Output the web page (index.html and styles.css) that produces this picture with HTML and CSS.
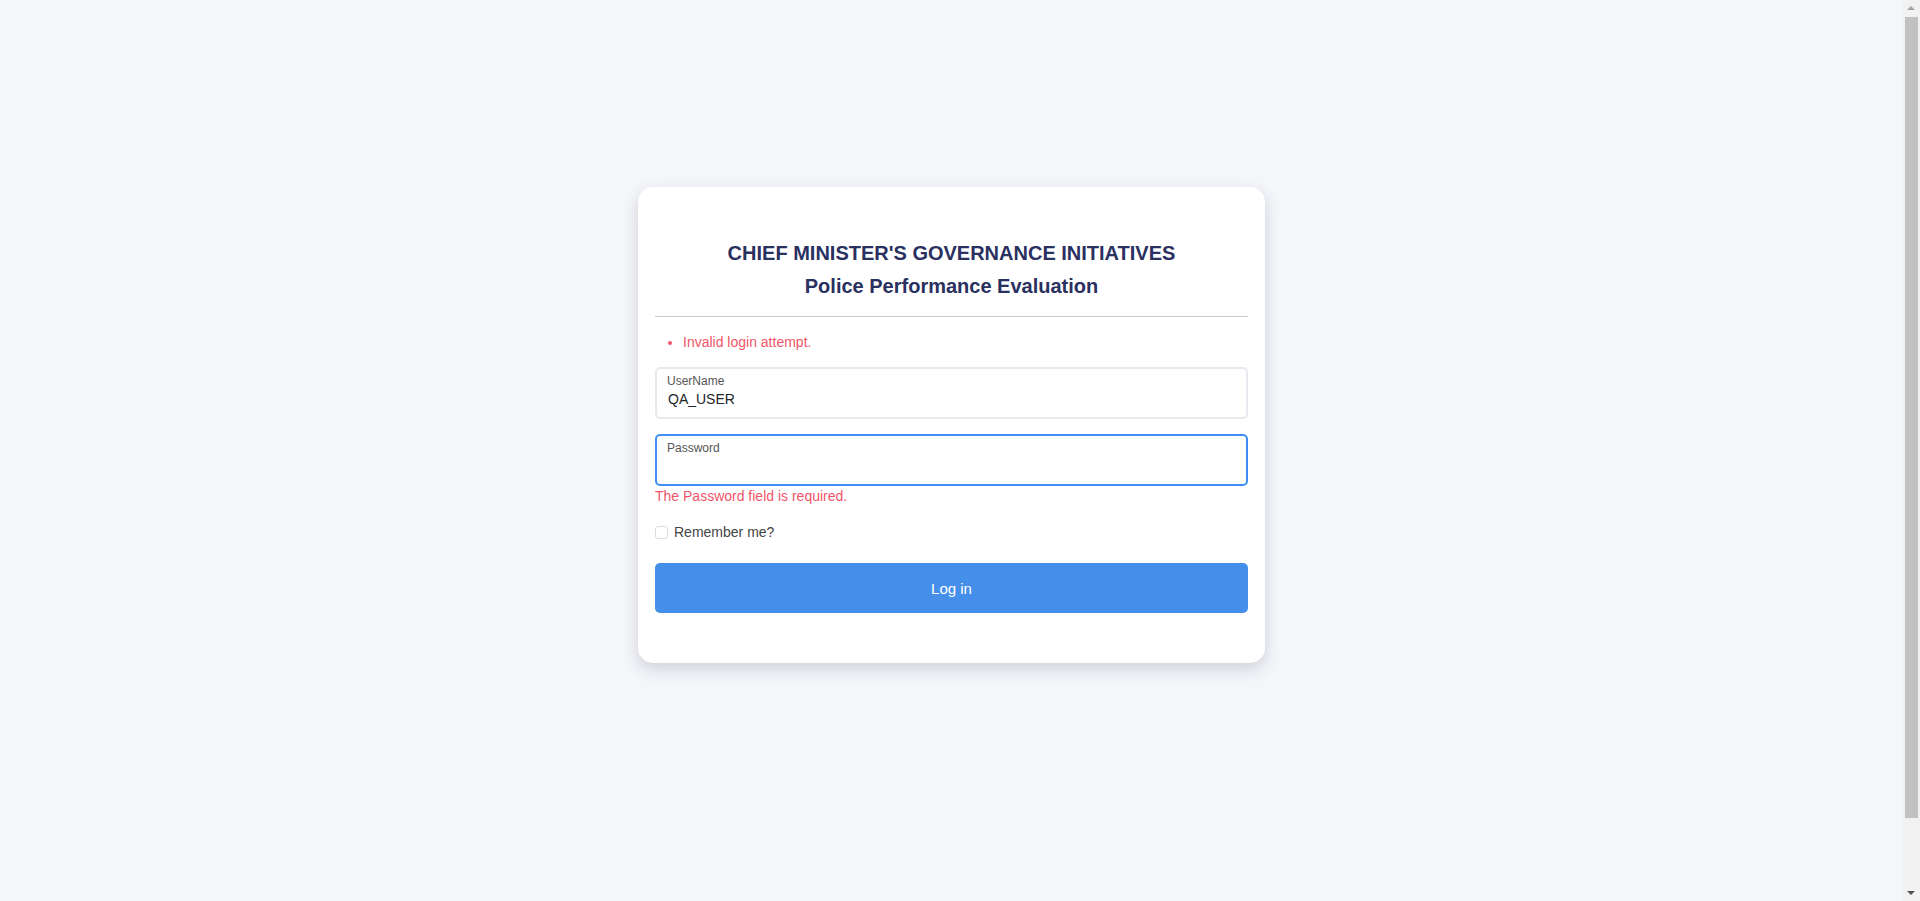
FILE: index.html
```html
<!DOCTYPE html>
<html lang="en">
<head>
<meta charset="utf-8">
<title>Log in</title>
<link rel="stylesheet" href="styles.css">
</head>
<body>
<main class="page">
  <section class="card">
    <h1 class="title">CHIEF MINISTER'S GOVERNANCE INITIATIVES</h1>
    <h2 class="subtitle">Police Performance Evaluation</h2>
    <hr class="divider">
    <ul class="summary">
      <li>Invalid login attempt.</li>
    </ul>
    <div class="field">
      <label class="field-label">UserName</label>
      <div class="field-value">QA_USER</div>
    </div>
    <div class="field field-focus">
      <label class="field-label">Password</label>
      <div class="field-value"></div>
    </div>
    <div class="field-error">The Password field is required.</div>
    <div class="remember">
      <span class="checkbox"></span>
      <span class="remember-text">Remember me?</span>
    </div>
    <button class="btn">Log in</button>
  </section>
</main>
<div class="scrollbar" aria-hidden="true">
  <span class="sb-arrow sb-up"></span>
  <span class="sb-thumb"></span>
  <span class="sb-arrow sb-down"></span>
</div>
</body>
</html>
```
FILE: styles.css
```css
html, body {
  margin: 0;
  padding: 0;
}
body {
  background: #f5f6fa;
  font-family: "Liberation Sans", Arial, sans-serif;
  color: #212529;
}
.page {
  box-sizing: border-box;
  height: 901px;
  padding: 187px 17px 0 0;
  overflow: hidden;
}
.card {
  width: 627px;
  box-sizing: border-box;
  margin: 0 auto;
  background: #fff;
  border-radius: 15px;
  padding: 50px 17px 50px;
  box-shadow: 0 6px 16px rgba(40, 45, 70, 0.18);
}
.title {
  margin: 0;
  font-size: 20px;
  line-height: 33px;
  font-weight: 700;
  text-align: center;
  color: #2a3060;
}
.subtitle {
  margin: 0;
  font-size: 20px;
  line-height: 33px;
  font-weight: 700;
  text-align: center;
  color: #2a3060;
}
.divider {
  margin: 13px 0 0;
  border: 0;
  border-top: 1px solid #c9c9cf;
  height: 0;
}
.summary {
  margin: 15px 0 15px;
  padding-left: 28px;
  color: #f0566a;
  font-size: 14px;
  line-height: 20px;
}
.field {
  box-sizing: border-box;
  height: 52px;
  border: 2px solid #e8e9ef;
  border-radius: 5px;
  padding: 5px 10px 0;
}
.field + .field {
  margin-top: 15px;
}
.field-focus {
  border-color: #3f8ef6;
}
.field-label {
  display: block;
  font-size: 12px;
  line-height: 14px;
  color: #555;
}
.field-value {
  font-size: 14px;
  line-height: 18px;
  margin-top: 2px;
  padding-left: 1px;
  color: #212529;
}
.field-error {
  font-size: 14px;
  line-height: 20px;
  color: #f0566a;
}
.remember {
  display: flex;
  align-items: center;
  gap: 6px;
  margin-top: 16px;
  height: 20px;
}
.checkbox {
  width: 11px;
  height: 11px;
  border: 1px solid #d9dbe2;
  border-radius: 3px;
  background: #fff;
}
.remember-text {
  font-size: 14px;
  color: #444;
}
.btn {
  display: block;
  width: 100%;
  height: 50px;
  margin-top: 21px;
  border: 0;
  border-radius: 5px;
  background: #458fea;
  color: #fff;
  font-family: "Liberation Sans", Arial, sans-serif;
  font-size: 15px;
}
.scrollbar {
  position: fixed;
  top: 0;
  right: 0;
  width: 17px;
  height: 901px;
  background: #f1f1f1;
}
.sb-thumb {
  position: absolute;
  left: 2px;
  right: 2px;
  top: 17px;
  height: 801px;
  background: #c1c1c1;
}
.sb-arrow {
  position: absolute;
  left: 4px;
  width: 0;
  height: 0;
  border-left: 4px solid transparent;
  border-right: 4px solid transparent;
}
.sb-up {
  top: 6px;
  border-bottom: 4px solid #a3a3a3;
}
.sb-down {
  bottom: 6px;
  border-top: 4px solid #505050;
}
```
